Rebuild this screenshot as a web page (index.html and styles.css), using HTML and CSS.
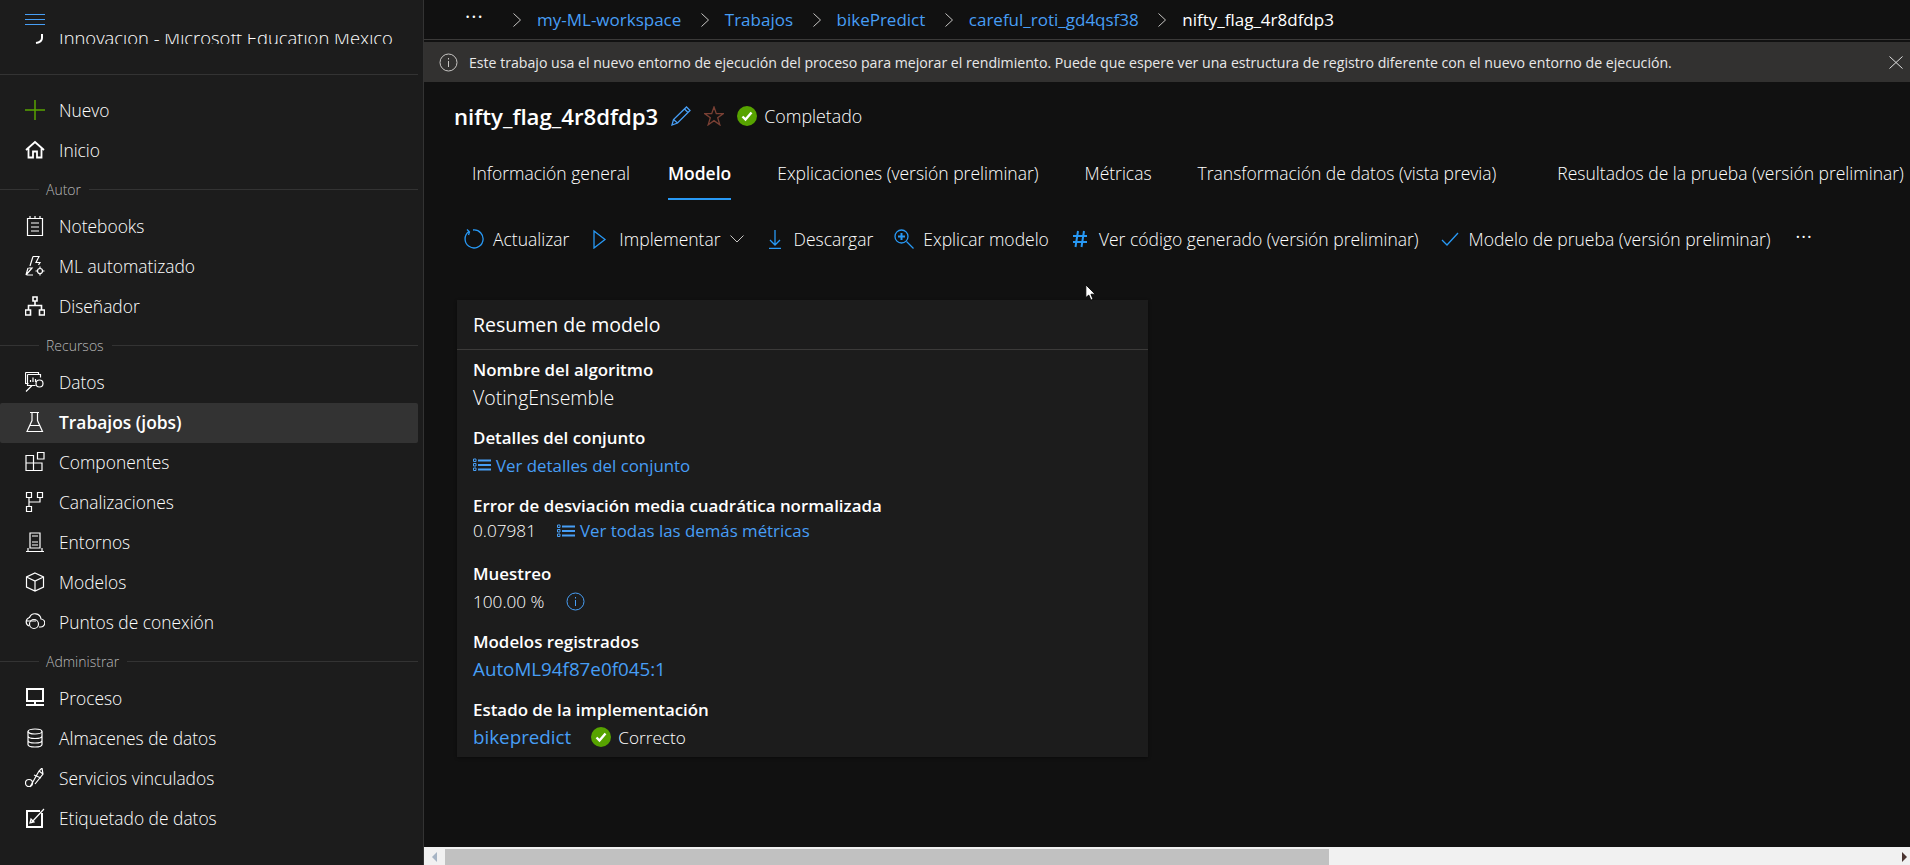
FILE: index.html
```html
<!DOCTYPE html>
<html lang="es">
<head>
    <meta charset="UTF-8">
    <title>nifty_flag_4r8dfdp3 - Azure Machine Learning</title>
    <link rel="stylesheet" href="styles.css">
</head>
<body>
<svg class="defs" width="0" height="0">
    <symbol id="check" viewBox="0 0 20 20">
        <circle cx="10" cy="10" r="10" fill="#57a300"/>
        <path d="M5.500 10.500l3 3 6-7" fill="none" stroke="#fff" stroke-width="2.400"/>
    </symbol>
    <symbol id="list" viewBox="0 0 18 14">
        <path d="M5 2.500h13M5 7h13M5 11.500h13" fill="none" stroke="#479ef5" stroke-width="2"/>
        <path d="M.5 1h2.500v2.500H.5zM.5 5.500h2.500V8H.5zM.5 10h2.500v2.500H.5z" fill="none" stroke="#479ef5"/>
    </symbol>
    <symbol id="chevron" viewBox="0 0 8 14">
        <path d="M.5.5L7.500 7 .5 13.500" fill="none" stroke="#c8c6c4"/>
    </symbol>
</svg>
<div class="app">
    <aside class="sidebar">
        <div class="side-top">
            <svg class="hamburger" width="20" height="12" viewBox="0 0 20 12"><path d="M0 .5h20M0 5.500h20M0 10.500h20" stroke="#479ef5"/></svg>
            <div class="tenant">
                <svg class="tenant-icon" width="8" height="10" viewBox="0 0 8 10"><path d="M7 0v4Q7 8 1 9" fill="none" stroke="#fff" stroke-width="2"/></svg>
                <span class="tenant-name">Innovación - Microsoft Education México</span>
            </div>
        </div>
        <hr class="side-line">
        <nav class="nav nav-first">
            <a class="nav-item"><svg viewBox="0 0 20 20"><path d="M10 0v20M0 10h20" stroke="#57a300" stroke-width="1.500"/></svg><span>Nuevo</span></a>
            <a class="nav-item"><svg viewBox="0 0 20 20"><path d="M1 10l9-8 9 8M3.500 8v9.500h4.500v-6h4v6h4.500V8" stroke-width="1.800"/></svg><span>Inicio</span></a>
        </nav>
        <div class="nav-head"><span>Autor</span></div>
        <nav class="nav">
            <a class="nav-item"><svg viewBox="0 0 20 20"><path d="M2.500 2.500h15v17h-15zM6 7h8M6 11h8M6 15h8M5 0v2M10 0v2M15 0v2"/></svg><span>Notebooks</span></a>
            <a class="nav-item"><svg viewBox="0 0 20 20"><path d="M8 .5h6l-3 6h4l-1.500 2.500M5 10l3-9.500M3 12l-2 7 6-7H3.500M2 19h6"/><circle cx="15" cy="15" r="2.500"/><path d="M15 10.500v2M15 17.500v2M10.500 15h2M17.500 15h2"/></svg><span>ML automatizado</span></a>
            <a class="nav-item"><svg viewBox="0 0 20 20"><path d="M8 1h4v4H8zM10 5v4M3.500 14v-4.500h13V14M.5 14h5v5h-5zM14.500 14h5v5h-5z" stroke-width="1.600"/></svg><span>Diseñador</span></a>
        </nav>
        <div class="nav-head"><span>Recursos</span></div>
        <nav class="nav">
            <a class="nav-item"><svg viewBox="0 0 20 20"><path d="M.5.500h13v2M.5.500v11h3M2.500 2.500h13v3M2.500 2.500v11h8M5.500 10V8M8 10V5.500M10.500 10V7M1 19.500l6-6"/><circle cx="15.500" cy="10.500" r="3.500" transform="translate(-1 1)"/></svg><span>Datos</span></a>
            <a class="nav-item active"><svg viewBox="0 0 20 20"><path d="M5 .5h9M7 .5v8L2 19.500h15.500L12.500 8.500v-8M4.500 13.500h10.500"/></svg><span>Trabajos (jobs)</span></a>
            <a class="nav-item"><svg viewBox="0 0 20 20"><path d="M1 3.500h7.500v7.500H1zM1 11h7.500v7.500H1zM8.500 11H17v7.500H8.500zM12.500 .5h6.500v6.500h-6.500z"/></svg><span>Componentes</span></a>
            <a class="nav-item"><svg viewBox="0 0 20 20"><path d="M1.500.5h5v5h-5zM12.500.5h5v5h-5zM1.500 14.500h5v5h-5zM4 5.500v9M4 10h11V5.500"/></svg><span>Canalizaciones</span></a>
            <a class="nav-item"><svg viewBox="0 0 20 20"><path d="M5 1h10v15H5zM7 4h6M7 10h6M7 13h6M3 16v3M17 16v3M1 19.500h18"/></svg><span>Entornos</span></a>
            <a class="nav-item"><svg viewBox="0 0 20 20"><path d="M10 1l8.500 4v10L10 19l-8.500-4V5zM1.500 5l8.500 4 8.500-4M10 9v10"/></svg><span>Modelos</span></a>
            <a class="nav-item"><svg viewBox="0 0 20 20"><path d="M14 15h1.500a4 4 0 0 0 .5-8 6 6 0 0 0-11.500-1.500A4.500 4.500 0 0 0 4 14M1 9h10"/><circle cx="9" cy="12" r="4.500"/></svg><span>Puntos de conexión</span></a>
        </nav>
        <div class="nav-head"><span>Administrar</span></div>
        <nav class="nav">
            <a class="nav-item"><svg viewBox="0 0 20 20"><path d="M2 1h16v12H2z" stroke-width="2"/><path d="M10 13v3M1 17h18" stroke-width="2"/></svg><span>Proceso</span></a>
            <a class="nav-item"><svg viewBox="0 0 20 20"><ellipse cx="10" cy="3.500" rx="7" ry="2.500"/><path d="M3 3.500v13c0 1.500 3 2.500 7 2.500s7-1 7-2.500v-13M3 8c0 1.500 3 2.500 7 2.500S17 9.500 17 8M3 12.500c0 1.500 3 2.500 7 2.500s7-1 7-2.500"/></svg><span>Almacenes de datos</span></a>
            <a class="nav-item"><svg viewBox="0 0 20 20"><path d="M5 19l9-16 3-3 1 6-8 10M14 3l4 3M9 7l7 3"/><circle cx="4" cy="15" r="3.500"/></svg><span>Servicios vinculados</span></a>
            <a class="nav-item"><svg viewBox="0 0 20 20"><path d="M17 5v14H2V3h13" stroke-width="2"/><path d="M6 15l13-14M5 15l1-4 3 3z"/></svg><span>Etiquetado de datos</span></a>
        </nav>
    </aside>

    <main class="main">
        <div class="crumbs">
            <span class="crumb-more">···</span>
            <svg class="crumb-sep first" width="8" height="14"><use href="#chevron"/></svg>
            <a class="crumb">my-ML-workspace</a>
            <svg class="crumb-sep" width="8" height="14"><use href="#chevron"/></svg>
            <a class="crumb">Trabajos</a>
            <svg class="crumb-sep" width="8" height="14"><use href="#chevron"/></svg>
            <a class="crumb">bikePredict</a>
            <svg class="crumb-sep" width="8" height="14"><use href="#chevron"/></svg>
            <a class="crumb">careful_roti_gd4qsf38</a>
            <svg class="crumb-sep" width="8" height="14"><use href="#chevron"/></svg>
            <span class="crumb-now">nifty_flag_4r8dfdp3</span>
        </div>

        <div class="notice">
            <svg width="19" height="19" viewBox="0 0 19 19" fill="none" stroke="#c8c6c4"><circle cx="9.500" cy="9.500" r="8.500"/><path d="M9.500 8v6M9.500 5v1.500"/></svg>
            <span class="notice-text">Este trabajo usa el nuevo entorno de ejecución del proceso para mejorar el rendimiento. Puede que espere ver una estructura de registro diferente con el nuevo entorno de ejecución.</span>
            <svg class="notice-close" width="14" height="13" viewBox="0 0 14 13"><path d="M.5.5l13 12M13.500.5l-13 12" stroke="#e0e0e0"/></svg>
        </div>

        <div class="title-row">
            <h1>nifty_flag_4r8dfdp3</h1>
            <svg class="title-edit" width="20" height="20" viewBox="0 0 20 20" fill="none" stroke="#479ef5" stroke-width="1.300"><path d="M1 19l1.500-5.500L15.500 1l3.500 3.500L6.500 17zM2.500 13.500L6.500 17M13.500 3l3.500 3.500"/></svg>
            <svg class="title-star" width="20" height="20" viewBox="0 0 20 20" fill="none" stroke="#7a4034" stroke-width="1.300"><path d="M10 1l2.300 6.600h7l-5.600 4.200 2.100 7L10 14.600l-5.800 4.200 2.100-7L.7 7.600h7z"/></svg>
            <svg class="status-icon" width="20" height="20"><use href="#check"/></svg>
            <span class="status-text">Completado</span>
        </div>

        <div class="tabs">
            <a class="tab tab-tight">Información general</a>
            <a class="tab tab-active">Modelo</a>
            <a class="tab">Explicaciones (versión preliminar)</a>
            <a class="tab">Métricas</a>
            <a class="tab tab-wide">Transformación de datos (vista previa)</a>
            <a class="tab">Resultados de la prueba (versión preliminar)</a>
        </div>

        <div class="toolbar">
            <a class="tool"><svg viewBox="0 0 20 20"><path d="M5 2.500a9 9 0 1 0 4-1.500M3 .5l2.500 2.500-1 3"/></svg>Actualizar</a>
            <a class="tool"><svg viewBox="0 0 20 20"><path d="M4 2l11 8.500L4 19z"/></svg>Implementar<svg class="tool-caret" viewBox="0 0 14 8"><path d="M.5.5L7 7 13.500.5"/></svg></a>
            <a class="tool"><svg viewBox="0 0 20 20"><path d="M10 1v15M5 11l5 5 5-5M4 19.500h12"/></svg>Descargar</a>
            <a class="tool"><svg viewBox="0 0 20 20"><circle cx="7.500" cy="7.500" r="6.500"/><path d="M12.500 12.500l7 7"/><path d="M7.500 4v7M4 7.500h7" stroke-width="2"/></svg>Explicar modelo</a>
            <a class="tool"><svg viewBox="0 0 20 20"><path d="M8 2L5.500 18M14 2l-2.500 16M3 7h14M3 13h14" stroke-width="2"/></svg>Ver código generado (versión preliminar)</a>
            <a class="tool tool-last"><svg viewBox="0 0 20 20"><path d="M2 11l5 5L18 4"/></svg>Modelo de prueba (versión preliminar)</a>
            <span class="tool-more">···</span>
        </div>

        <section class="card">
            <h2 class="card-title">Resumen de modelo</h2>
            <div class="card-body">
                <div class="field">
                    <div class="field-label">Nombre del algoritmo</div>
                    <div class="field-value big">VotingEnsemble</div>
                </div>
                <div class="field">
                    <div class="field-label">Detalles del conjunto</div>
                    <div class="field-value"><a class="link"><svg class="list-icon" width="18" height="14"><use href="#list"/></svg>Ver detalles del conjunto</a></div>
                </div>
                <div class="field">
                    <div class="field-label">Error de desviación media cuadrática normalizada</div>
                    <div class="field-value value-up"><span class="num">0.07981</span><a class="link"><svg class="list-icon" width="18" height="14"><use href="#list"/></svg>Ver todas las demás métricas</a></div>
                </div>
                <div class="field">
                    <div class="field-label">Muestreo</div>
                    <div class="field-value"><span class="num">100.00 %</span><svg width="19" height="19" viewBox="0 0 19 19" fill="none" stroke="#479ef5"><circle cx="9.500" cy="9.500" r="8.500"/><path d="M9.500 8v6M9.500 5v1.500"/></svg></div>
                </div>
                <div class="field">
                    <div class="field-label">Modelos registrados</div>
                    <div class="field-value"><a class="link link-big">AutoML94f87e0f045:1</a></div>
                </div>
                <div class="field">
                    <div class="field-label">Estado de la implementación</div>
                    <div class="field-value"><a class="link link-big">bikepredict</a><svg class="deploy-check" width="20" height="20"><use href="#check"/></svg><span>Correcto</span></div>
                </div>
            </div>
        </section>

        <svg class="cursor" width="11" height="17" viewBox="0 0 13 20"><path d="M1 1v15l3.500-3 2.500 6 2.500-1-2.500-6h5z" fill="#fff" stroke="#000"/></svg>

        <div class="hscroll">
            <span class="arrow left"></span>
            <div class="hscroll-thumb"></div>
            <span class="arrow right"></span>
        </div>
    </main>
</div>
</body>
</html>
```

FILE: styles.css
```css
* {
    box-sizing: border-box;
}
html, body {
    height: 100%;
}
body {
    margin: 0;
    overflow: hidden;
    background-color: #111111;
    color: #ffffff;
    font-family: "Open Sans", "Noto Sans", Arial, sans-serif;
    font-size: 17.400px;
    font-weight: 300;
}
.defs {
    position: absolute;
}
.app {
    display: flex;
    height: 865px;
}

/* sidebar */
.sidebar {
    flex: 0 0 424px;
    background-color: #1c1c1c;
    border-right: 1px solid #333333;
    padding-right: 5px;
    overflow: hidden;
}
.side-top {
    height: 74px;
    padding: 14px 0 0 25px;
}
.hamburger {
    display: block;
}
.tenant {
    display: flex;
    align-items: flex-end;
    height: 10px;
    margin: 8px 0 0 10px;
    overflow: hidden;
    white-space: nowrap;
}
.tenant-icon {
    flex: 0 0 8px;
    margin-right: 16px;
}
.tenant-name {
    font-size: 18.400px;
    line-height: 20px;
    margin-bottom: -4px;
}
.side-line {
    margin: 0;
    border: none;
    border-top: 1px solid #333333;
}
.nav-first {
    margin-top: 16px;
}
.nav-item {
    display: flex;
    align-items: center;
    height: 40px;
    padding: 0 0 2px 25px;
    border-radius: 2px;
    color: #ffffff;
}
.nav-item svg {
    flex: 0 0 20px;
    width: 20px;
    height: 20px;
    margin-right: 14px;
    fill: none;
    stroke: #ffffff;
    stroke-width: 1.200;
}
.nav-item.active {
    background-color: #333333;
    font-weight: 600;
}
.nav-head {
    display: flex;
    align-items: center;
    height: 36px;
    font-size: 14px;
    color: #b8b8b8;
}
.nav-head::before {
    content: "";
    flex: 0 0 39px;
    border-top: 1px solid #333333;
}
.nav-head::after {
    content: "";
    flex: 1;
    border-top: 1px solid #333333;
}
.nav-head span {
    padding: 0 8px 0 7px;
}

/* main column */
.main {
    position: relative;
    flex: 1;
    min-width: 0;
    overflow: hidden;
}
.crumbs {
    display: flex;
    align-items: center;
    height: 40px;
    padding-left: 41px;
    border-bottom: 1px solid #3b3a39;
    font-size: 17px;
    font-weight: 400;
    white-space: nowrap;
}
.crumb {
    color: #479ef5;
}
.crumb-more {
    width: 18px;
    margin-top: -6px;
    font-size: 20px;
    letter-spacing: 1px;
}
.crumb-sep {
    flex: 0 0 8px;
    margin: 0 16px 0 19.500px;
}
.crumb-sep.first {
    margin-left: 30px;
}
.notice {
    display: flex;
    align-items: center;
    height: 40px;
    margin-top: 2px;
    padding-left: 15px;
    background-color: #323130;
    font-size: 14.130px;
    font-weight: 400;
    color: #e8e8e8;
}
.notice-text {
    margin-left: 11px;
    white-space: nowrap;
}
.notice-close {
    margin-left: auto;
    margin-right: 7px;
}
.title-row {
    display: flex;
    align-items: center;
    height: 34px;
    margin-top: 17px;
    padding-left: 30px;
}
.title-row h1 {
    margin: 0;
    font-size: 22.200px;
    font-weight: 600;
}
.title-edit {
    margin-left: 13px;
}
.title-star {
    margin-left: 13px;
}
.status-icon {
    margin-left: 13px;
}
.status-text {
    margin-left: 7px;
    font-size: 17.800px;
}
.tabs {
    display: flex;
    height: 45px;
    margin-top: 22px;
    padding-left: 48px;
    font-size: 17.500px;
    white-space: nowrap;
}
.tab {
    height: 45px;
    line-height: 36px;
    margin-right: 46px;
}
.tab-tight {
    margin-right: 38px;
}
.tab-wide {
    margin-right: 61px;
}
.tab-active {
    margin-right: 46px;
    font-weight: 600;
    border-bottom: 2px solid #2899f5;
}
.toolbar {
    display: flex;
    align-items: center;
    height: 36px;
    margin-top: 21px;
    padding-left: 40px;
    font-size: 17.500px;
    white-space: nowrap;
}
.tool {
    display: flex;
    align-items: center;
    margin-right: 21px;
}
.tool-last {
    margin-right: 25px;
}
.tool svg {
    width: 20px;
    height: 20px;
    margin-right: 9px;
    fill: none;
    stroke: #2899f5;
    stroke-width: 1.300;
}
.tool .tool-caret {
    width: 14px;
    height: 8px;
    margin: 0 0 0 9px;
    stroke: #c8c6c4;
    stroke-width: 1;
}
.tool-more {
    margin-top: -6px;
    font-size: 18px;
    font-weight: 400;
    letter-spacing: 1px;
}

/* model summary card */
.card {
    width: 691px;
    height: 457px;
    margin: 43px 0 0 33px;
    background-color: #1c1c1c;
    box-shadow: 0 1px 3px rgba(0, 0, 0, 0.4);
}
.card-title {
    height: 50px;
    margin: 0;
    padding: 12px 16px 0;
    border-bottom: 1px solid #3b3a39;
    font-size: 19.500px;
    font-weight: 400;
    line-height: 26px;
}
.card-body {
    padding: 8px 16px 0;
}
.field {
    margin-bottom: 14px;
}
.field-label {
    height: 26px;
    line-height: 24px;
    font-size: 16.900px;
    font-weight: 600;
}
.field-value {
    display: flex;
    align-items: center;
    height: 28px;
    padding-bottom: 2px;
    font-size: 17.200px;
    color: #ffffff;
}
.field-value.big {
    font-size: 19.500px;
}
.field-value.value-up {
    padding-bottom: 7px;
}
.link {
    display: inline-flex;
    align-items: center;
    font-size: 16.850px;
    font-weight: 400;
    color: #479ef5;
}
.link-big {
    font-size: 18.800px;
}
.list-icon {
    margin-right: 5px;
}
.num {
    margin-right: 21px;
}
.deploy-check {
    margin: 0 7px 0 20px;
}

.cursor {
    position: absolute;
    left: 661px;
    top: 284px;
}

/* bottom scrollbar */
.hscroll {
    position: absolute;
    left: 0;
    right: 0;
    bottom: 0;
    display: flex;
    align-items: flex-end;
    height: 18px;
    background-color: #f1f1f1;
}
.hscroll-thumb {
    width: 884px;
    height: 16px;
    margin-left: 8px;
    background-color: #c1c1c1;
}
.arrow {
    width: 0;
    height: 0;
    margin-bottom: 3px;
    border-top: 5px solid transparent;
    border-bottom: 5px solid transparent;
}
.arrow.left {
    margin-left: 8px;
    border-right: 5px solid #a6b4c4;
}
.arrow.right {
    margin-left: auto;
    margin-right: 3px;
    border-left: 5px solid #4a3430;
}
```
